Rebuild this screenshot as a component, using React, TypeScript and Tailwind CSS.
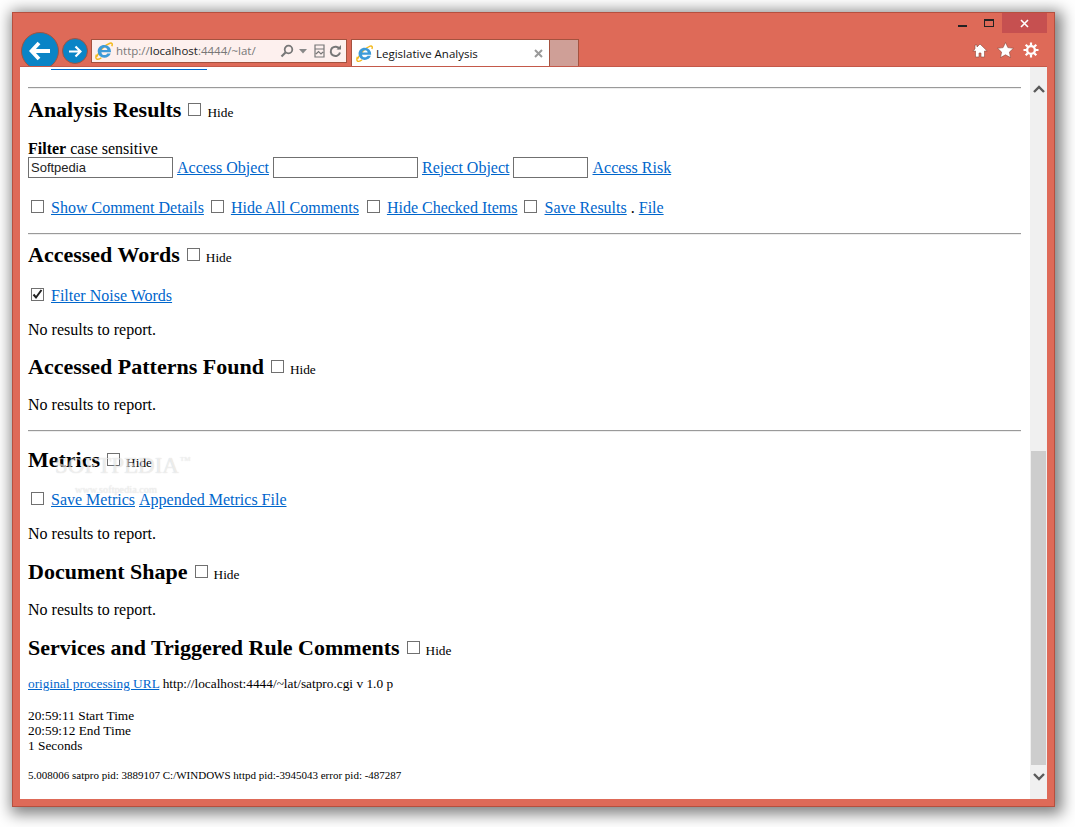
import React from 'react';

const IeLogo: React.FC<{ size?: number }> = ({ size = 18 }) => (
  <svg width={size} height={size} viewBox="0 0 18 18" className="shrink-0">
    <path d="M1.500 15C4 10 8.500 3.500 15 1.200c2-.6 2.800.8 1.800 3" fill="none" stroke="#f2b91c" strokeWidth="1.500" />
    <path d="M1.500 12.500c-1.200 3-.6 5 1.300 4.800 1.300-.1 2.600-.8 3.600-1.600" fill="none" stroke="#f2b91c" strokeWidth="1.400" />
    <path d="M9.300 3a6.700 6.700 0 0 1 6.800 7.200H6.400c.2 1.900 1.400 2.900 3 2.900 1.300 0 2.300-.6 2.800-1.600h3.500c-.8 2.600-3.400 4.300-6.300 4.300a6.500 6.500 0 0 1-6.700-6.400C2.700 5.700 5.600 3 9.300 3zM6.500 8h5.900c-.2-1.500-1.500-2.400-2.900-2.400S6.800 6.500 6.500 8z" fill="#3d9bd8" fillRule="evenodd" />
  </svg>
);

const Check: React.FC<{ checked?: boolean; className?: string }> = ({ checked, className = '' }) => (
  <span className={`inline-flex items-center justify-center w-[13px] h-[13px] border border-[#707070] bg-white shrink-0 ${className}`}>
    {checked && (
      <svg width="11" height="11" viewBox="0 0 11 11">
        <path d="M1.500 5.500L4 8.500L9.500 1" fill="none" stroke="#222" strokeWidth="2" />
      </svg>
    )}
  </span>
);

const A: React.FC<{ children: React.ReactNode; className?: string }> = ({ children, className = '' }) => (
  <a href="#" className={`text-[#0066cc] underline ${className}`}>{children}</a>
);

const Heading: React.FC<{ title: string; className?: string }> = ({ title, className = '' }) => (
  <div className={`flex items-center h-[28px] ${className}`}>
    <h2 className="text-[22px] leading-[28px] font-bold text-black">{title}</h2>
    <Check className="ml-[7px] -mt-[1px]" />
    <span className="ml-[6px] text-[13.33px] leading-[15px] mt-[5px]">Hide</span>
  </div>
);

const CheckLink: React.FC<{ label: string; checked?: boolean; gap?: string }> = ({ label, checked, gap = 'mr-[7px]' }) => (
  <>
    <Check checked={checked} className={`ml-[3px] -mt-[3px] ${gap}`} />
    <A>{label}</A>
  </>
);

const Rule: React.FC<{ className?: string }> = ({ className = '' }) => (
  <div className={`h-[2px] border-t border-[#9a9a9a] border-b-[#eee] border-b ${className}`} />
);

const NoResults: React.FC<{ className?: string }> = ({ className = '' }) => (
  <p className={`h-[18px] leading-[18px] ${className}`}>No results to report.</p>
);

const App: React.FC = () => (
  <div className="w-[1075px] h-[827px] bg-white overflow-hidden pl-[12px] pt-[12px] font-['Liberation_Serif',serif]">
    <div className="w-[1043px] h-[795px] bg-[#de6a58] border border-[#b5503f] shadow-[3px_3px_14px_4px_rgba(0,0,0,0.5)] flex flex-col">
      {/* title bar */}
      <div className="h-[21px] flex justify-end pr-[7px] shrink-0">
        <span className="w-[9px] h-[2px] bg-[#222] mt-[12px]" />
        <span className="ml-[17px] w-[10px] h-[8px] mt-[6px] border border-[#222] border-t-2" />
        <div className="ml-[8px] w-[45px] h-[20px] bg-[#c65050] flex items-center justify-center">
          <svg width="9" height="9" viewBox="0 0 9 9"><path d="M1 1l7 7M8 1l-7 7" stroke="#fff" strokeWidth="1.600" /></svg>
        </div>
      </div>
      {/* toolbar */}
      <div className="h-[32px] flex items-start pl-[8px] shrink-0">
        <div className="w-[38px] h-[38px] -mt-[2px] rounded-full bg-[#0a84c6] border border-[#a4523f] flex items-center justify-center shrink-0">
          <svg width="22" height="20" viewBox="0 0 22 20"><path d="M10 2L2.500 10l7.500 8M3 10H21" fill="none" stroke="#fff" strokeWidth="3.800" /></svg>
        </div>
        <div className="w-[26px] h-[26px] mt-[4px] ml-[3px] rounded-full bg-[#0a84c6] border border-[#a4523f] flex items-center justify-center shrink-0">
          <svg width="14" height="13" viewBox="0 0 14 13"><path d="M7.500 1.500L12.500 6.500L7.500 11.500M12 6.500H1" fill="none" stroke="#fff" strokeWidth="2.200" /></svg>
        </div>
        <div className="w-[256px] h-[24px] mt-[5px] ml-[3px] bg-[#fdf0ee] border border-[#a4523f] flex items-center pl-[3px] shrink-0 font-['Open_Sans',sans-serif] text-[11.5px] text-[#777]">
          <IeLogo size={18} />
          <span className="ml-[3px] w-[164px] whitespace-nowrap">http://<span className="text-[#222]">localhost</span>:4444/~lat/</span>
          <svg width="14" height="14" viewBox="0 0 14 14"><circle cx="8.500" cy="5.500" r="3.800" fill="none" stroke="#777" strokeWidth="1.800" /><path d="M5.500 8.500L1.500 12.500" stroke="#777" strokeWidth="2.200" /></svg>
          <svg width="8" height="5" viewBox="0 0 8 5" className="ml-[5px]"><path d="M0 0h8L4 4.500z" fill="#888" /></svg>
          <svg width="11" height="14" viewBox="0 0 11 14" className="ml-[7px]"><path d="M1 1h9v12H1zM1 5h9M2 10l2.500-2.500L7 10l2-2" fill="none" stroke="#777" strokeWidth="1.200" /></svg>
          <svg width="13" height="13" viewBox="0 0 13 13" className="ml-[4px]"><path d="M10.500 4A4.700 4.700 0 1 0 11 7.500" fill="none" stroke="#777" strokeWidth="2" /><path d="M7.500 4.500H12V0z" fill="#777" /></svg>
        </div>
        <div className="w-[199px] h-[28px] mt-[5px] ml-[4px] bg-white border-t border-l border-r border-[#a4523f] flex items-center pl-[4px] shrink-0 font-['Open_Sans',sans-serif] text-[11.5px] text-[#111]">
          <IeLogo size={17} />
          <span className="ml-[3px] w-[158px] whitespace-nowrap">Legislative Analysis</span>
          <svg width="9" height="9" viewBox="0 0 9 9"><path d="M1 1l7 7M8 1l-7 7" stroke="#9a9a9a" strokeWidth="2" /></svg>
        </div>
        <div className="w-[29px] h-[28px] mt-[5px] bg-[#cf9f97] border-t border-r border-[#a4523f] shrink-0" />
        <div className="ml-auto flex items-center gap-[9px] pr-[15px] pt-[8px]">
          <svg width="16" height="15" viewBox="0 0 16 15"><path d="M8 1L5 4V2H3v4L.8 8h2.700v6H7v-4h2v4h3.500V8h2.700z" fill="#fff" stroke="#8a4a3e" strokeWidth=".6" /></svg>
          <svg width="17" height="16" viewBox="0 0 17 16"><path d="M8.500.5l2.400 5.100 5.600.7-4.100 3.800 1.100 5.500-5-2.800-5 2.800 1.100-5.500L.5 6.300l5.600-.7z" fill="#fff" stroke="#8a4a3e" strokeWidth=".6" /></svg>
          <svg width="16" height="16" viewBox="0 0 16 16"><circle cx="8" cy="8" r="3.900" fill="none" stroke="#fff" strokeWidth="2.400" /><path d="M8 .5v3M8 12.500v3M.5 8h3M12.500 8h3M2.700 2.700l2.100 2.100M11.200 11.200l2.100 2.100M13.300 2.700l-2.100 2.100M4.800 11.200l-2.100 2.100" stroke="#fff" strokeWidth="2.200" /></svg>
        </div>
      </div>
      {/* page + scrollbar */}
      <div className="relative z-10 h-[733px] mx-[7px] flex bg-white border-t border-[#c4594a] shrink-0">
        <div className="relative w-[1010px] shrink-0 pl-[8px] pr-[9px] text-[16px] leading-[18px] text-black overflow-hidden">
          <div className="ml-[23px] w-[156px] h-[1px] bg-[#0066cc] mt-[2px]" />
          <Rule className="mt-[17px]" />
          <Heading title="Analysis Results" className="mt-[7px]" />
          <p className="mt-[16px] h-[18px]"><b>Filter</b> case sensitive</p>
          <div className="flex items-center h-[21px] whitespace-pre -mt-[1px]">
            <input readOnly value="Softpedia" className="w-[145px] h-[21px] border border-[#707070] px-[2px] text-[13px] font-['Liberation_Sans',sans-serif] text-[#222]" />
            <A className="ml-[4px]">Access Object</A>
            <input readOnly className="ml-[4px] w-[145px] h-[21px] border border-[#707070]" />
            <A className="ml-[4px]">Reject Object</A>
            <input readOnly className="ml-[4px] w-[75px] h-[21px] border border-[#707070]" />
            <A className="ml-[4px]">Access Risk</A>
          </div>
          <div className="flex items-center h-[18px] mt-[21px] whitespace-pre">
            <CheckLink label="Show Comment Details" />
            <span className="w-[4px]" />
            <CheckLink label="Hide All Comments" />
            <span className="w-[5px]" />
            <CheckLink label="Hide Checked Items" />
            <span className="w-[3px]" />
            <CheckLink label="Save Results" gap="mr-[8px]" />
            <span> . </span>
            <A>File</A>
          </div>
          <Rule className="mt-[16px]" />
          <Heading title="Accessed Words" className="mt-[6px]" />
          <div className="flex items-center h-[18px] mt-[18px]">
            <CheckLink label="Filter Noise Words" checked />
          </div>
          <NoResults className="mt-[16px]" />
          <Heading title="Accessed Patterns Found" className="mt-[14px]" />
          <NoResults className="mt-[15px]" />
          <Rule className="mt-[16px]" />
          <Heading title="Metrics" className="mt-[14px]" />
          <div className="flex items-center h-[18px] mt-[17px]">
            <CheckLink label="Save Metrics" />
            <A className="ml-[4px]">Appended Metrics File</A>
          </div>
          <NoResults className="mt-[16px]" />
          <Heading title="Document Shape" className="mt-[15px]" />
          <NoResults className="mt-[15px]" />
          <Heading title="Services and Triggered Rule Comments" className="mt-[15px]" />
          <p className="mt-[14px] h-[15px] text-[13.33px] leading-[15px] whitespace-pre"><A>original processing URL</A> http://localhost:4444/~lat/satpro.cgi v 1.0 p</p>
          <div className="mt-[17px] text-[13.33px] leading-[15px]">
            <p>20:59:11 Start Time</p>
            <p>20:59:12 End Time</p>
            <p>1 Seconds</p>
          </div>
          <p className="mt-[16px] text-[11px] leading-[12px]">5.008006 satpro pid: 3889107 C:/WINDOWS httpd pid:-3945043 error pid: -487287</p>
          {/* watermark */}
          <span className="absolute left-[35px] top-[385px] text-[23px] leading-[28px] text-white/60 [text-shadow:0_0_1px_rgba(0,0,0,0.2)]">SOFTPEDIA</span>
          <span className="absolute left-[160px] top-[388px] text-[7px] leading-[8px] text-white/60 [text-shadow:0_0_1px_rgba(0,0,0,0.2)]">TM</span>
          <span className="absolute left-[55px] top-[417px] text-[10.25px] leading-[12px] text-white/60 [text-shadow:0_0_1px_rgba(0,0,0,0.2)]">www.softpedia.com</span>
        </div>
        <div className="w-[17px] bg-[#f0f0f0] flex flex-col items-center shrink-0">
          <svg width="12" height="8" viewBox="0 0 12 8" className="mt-[18px] shrink-0"><path d="M1 7l5-5 5 5" fill="none" stroke="#5a5a5a" strokeWidth="2.400" /></svg>
          <div className="w-[15px] h-[314px] bg-[#cdcdcd] mt-[358px] shrink-0" />
          <svg width="12" height="8" viewBox="0 0 12 8" className="mt-[8px] shrink-0"><path d="M1 1l5 5 5-5" fill="none" stroke="#5a5a5a" strokeWidth="2.400" /></svg>
        </div>
      </div>
    </div>
  </div>
);

export default App;
